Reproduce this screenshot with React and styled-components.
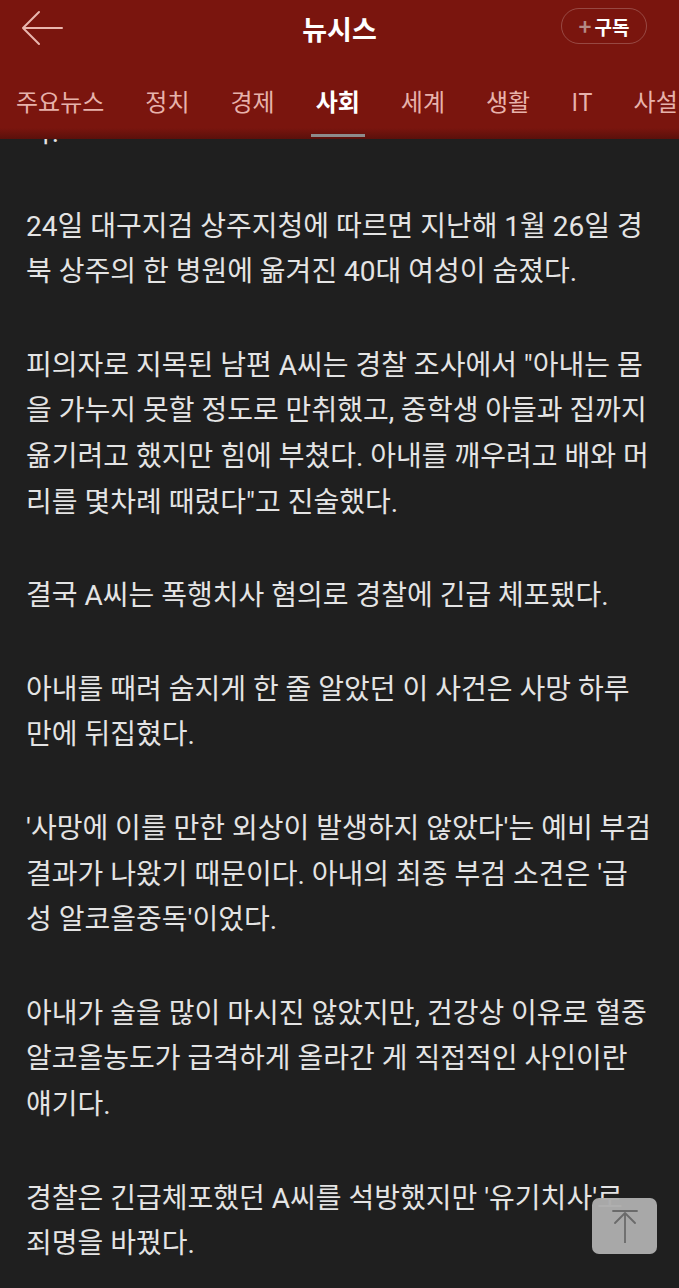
import React from "react";
import styled, { createGlobalStyle } from "styled-components";

const GlobalStyle = createGlobalStyle`
  html, body {
    margin: 0;
    padding: 0;
    background: #1f1f1f;
  }
  * { box-sizing: border-box; }
`;

const tabs = ["주요뉴스", "정치", "경제", "사회", "세계", "생활", "IT", "사설"];

const paragraphs = [
  ["다."],
  ["24일 대구지검 상주지청에 따르면 지난해 1월 26일 경", "북 상주의 한 병원에 옮겨진 40대 여성이 숨졌다."],
  [
    "피의자로 지목된 남편 A씨는 경찰 조사에서 \"아내는 몸",
    "을 가누지 못할 정도로 만취했고, 중학생 아들과 집까지",
    "옮기려고 했지만 힘에 부쳤다. 아내를 깨우려고 배와 머",
    "리를 몇차례 때렸다\"고 진술했다.",
  ],
  ["결국 A씨는 폭행치사 혐의로 경찰에 긴급 체포됐다."],
  ["아내를 때려 숨지게 한 줄 알았던 이 사건은 사망 하루", "만에 뒤집혔다."],
  [
    "'사망에 이를 만한 외상이 발생하지 않았다'는 예비 부검",
    "결과가 나왔기 때문이다. 아내의 최종 부검 소견은 '급",
    "성 알코올중독'이었다.",
  ],
  [
    "아내가 술을 많이 마시진 않았지만, 건강상 이유로 혈중",
    "알코올농도가 급격하게 올라간 게 직접적인 사인이란",
    "얘기다.",
  ],
  ["경찰은 긴급체포했던 A씨를 석방했지만 '유기치사'로", "죄명을 바꿨다."],
];

export default function App() {
  return (
    <Page>
      <GlobalStyle />
      <Header>
        <TopBar>
          <BackButton aria-label="뒤로">
            <svg width="44" height="36" viewBox="0 0 44 36" fill="none">
              <path d="M42 18H3M19 2L3 18l16 16" stroke="#e9b6ae" strokeWidth="2" strokeLinecap="round" strokeLinejoin="round" />
            </svg>
          </BackButton>
          <Title>뉴시스</Title>
          <SubscribeButton>
            <Plus>+</Plus>구독
          </SubscribeButton>
        </TopBar>
        <TabRow>
          {tabs.map((t) => (
            <Tab key={t} $active={t === "사회"}>
              {t}
            </Tab>
          ))}
        </TabRow>
      </Header>

      {/* scrolled article body, clipped under the app bar */}
      <Viewport>
        <Article>
          {paragraphs.map((lines, i) => (
            <Paragraph key={i}>
              {lines.map((line, j) => (
                <Line key={j}>{line}</Line>
              ))}
            </Paragraph>
          ))}
        </Article>

        <TopButton aria-label="맨 위로">
          <svg width="30" height="34" viewBox="0 0 30 34" fill="none">
            <path d="M3 2h24M15 4v30M5 14L15 4l10 10" stroke="#6a6a6a" strokeWidth="1.8" strokeLinecap="round" strokeLinejoin="round" />
          </svg>
        </TopButton>
      </Viewport>
    </Page>
  );
}

const Page = styled.div`
  width: 679px;
  height: 1288px;
  display: flex;
  flex-direction: column;
  overflow: hidden;
  background: #1f1f1f;
  font-family: Roboto, "Noto Sans CJK KR", sans-serif;
`;

const Header = styled.header`
  flex: none;
  height: 139px;
  background: linear-gradient(to bottom, #7a150e 0, #7a150e 128px, #5a100b 139px);
  overflow: hidden;
`;

const TopBar = styled.div`
  height: 56px;
  display: flex;
  align-items: center;
  justify-content: space-between;
  padding: 0 32px 0 20px;
  position: relative;
`;

const BackButton = styled.button`
  background: none;
  border: 0;
  padding: 0;
  display: flex;
  align-items: center;
  width: 44px;
  height: 36px;
`;

const Title = styled.h1`
  position: absolute;
  left: 0;
  right: 0;
  top: 0;
  height: 56px;
  margin: 0;
  display: flex;
  align-items: center;
  justify-content: center;
  pointer-events: none;
  color: #ffffff;
  font-family: "Noto Sans CJK KR", sans-serif;
  font-size: 27px;
  font-weight: 700;
`;

const SubscribeButton = styled.button`
  height: 36px;
  width: 86px;
  margin-top: -4px;
  border-radius: 18px;
  border: 1.5px solid rgba(255, 255, 255, 0.22);
  background: transparent;
  color: #ffffff;
  font-family: "Noto Sans CJK KR", sans-serif;
  font-size: 19px;
  font-weight: 700;
  display: flex;
  align-items: center;
  justify-content: center;
  gap: 3px;
  padding: 0;
`;

const Plus = styled.span`
  color: #b48a86;
  font-size: 22px;
  font-weight: 700;
  line-height: 1;
  margin-top: -2px;
`;

const TabRow = styled.nav`
  height: 83px;
  display: flex;
  align-items: center;
  gap: 41px;
  padding: 0 0 0 16px;
  white-space: nowrap;
`;

const Tab = styled.span`
  position: relative;
  flex: none;
  height: 83px;
  display: flex;
  align-items: center;
  padding-top: 6px;
  font-family: "Noto Sans CJK KR", sans-serif;
  font-size: 24px;
  font-weight: ${(p) => (p.$active ? 700 : 400)};
  color: ${(p) => (p.$active ? "#ffffff" : "#e7b2ab")};

  &::after {
    content: "";
    display: ${(p) => (p.$active ? "block" : "none")};
    position: absolute;
    left: -5px;
    right: -5px;
    bottom: 2px;
    height: 3px;
    background: #8c8c8c;
  }
`;

const Viewport = styled.main`
  position: relative;
  flex: 1;
  overflow: hidden;
`;

const Article = styled.article`
  margin-top: -29px;
  padding: 0 26px;
  color: #e4e4e4;
`;

const Paragraph = styled.p`
  margin: 0 0 48px;
  font-size: 28px;
  line-height: 45.6px;
`;

const Line = styled.span`
  display: block;
  white-space: nowrap;
`;

const TopButton = styled.button`
  position: absolute;
  left: 592px;
  top: 1059px;
  width: 65px;
  height: 56px;
  border: 0;
  border-radius: 7px;
  background: rgba(172, 172, 172, 0.97);
  display: flex;
  align-items: center;
  justify-content: center;
  padding: 0;
`;
